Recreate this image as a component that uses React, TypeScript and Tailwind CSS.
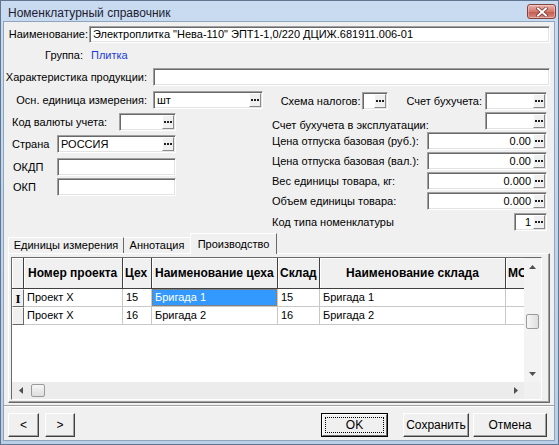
import React from "react";

const FONT = "font-['Liberation_Sans',Arial,sans-serif]";

function Dots() {
  return (
    <span className="flex items-center gap-[1px]">
      <span className="w-[2px] h-[2px] bg-[#202020]" />
      <span className="w-[2px] h-[2px] bg-[#202020]" />
      <span className="w-[2px] h-[2px] bg-[#202020]" />
    </span>
  );
}

function EllButton() {
  return (
    <div className="w-[12px] shrink-0 self-stretch bg-[#f0f0f0] border-t border-l border-white border-r border-b border-r-[#8a8a8a] border-b-[#8a8a8a] flex items-center justify-center">
      <Dots />
    </div>
  );
}

function Field({
  w,
  h = "h-[18px]",
  value = "",
  right = false,
  btn = false,
}: {
  w: string;
  h?: string;
  value?: string;
  right?: boolean;
  btn?: boolean;
}) {
  return (
    <div
      className={`${w} ${h} shrink-0 flex bg-white border border-t-[#a0a0a0] border-l-[#a0a0a0] border-b-white border-r-white shadow-[inset_1px_1px_0_#696969,inset_-1px_-1px_0_#e3e3e3] p-[1px]`}
    >
      <div
        className={`flex-1 flex items-center px-[2px] text-[11px] leading-none whitespace-nowrap overflow-hidden ${
          right ? "justify-end" : ""
        }`}
      >
        {value}
      </div>
      {btn && <EllButton />}
    </div>
  );
}

function Label({ className = "", children }: { className?: string; children: React.ReactNode }) {
  return <div className={`text-[11px] leading-[13px] whitespace-nowrap shrink-0 ${className}`}>{children}</div>;
}

function WinButton({ w, children, def = false }: { w: string; children: React.ReactNode; def?: boolean }) {
  if (def) {
    return (
      <div className={`${w} h-[24px] border border-black shrink-0`}>
        <div className="w-full h-full bg-[#f0f0f0] border-t border-l border-white border-r border-b border-r-[#696969] border-b-[#696969] p-[2px]">
          <div className="w-full h-full border border-dotted border-black flex items-center justify-center text-[12px]">
            {children}
          </div>
        </div>
      </div>
    );
  }
  return (
    <div
      className={`${w} h-[24px] shrink-0 bg-[#f0f0f0] border-t border-l border-white border-r border-b border-r-[#404040] border-b-[#404040] shadow-[inset_-1px_-1px_0_#a0a0a0] flex items-center justify-center text-[12px]`}
    >
      {children}
    </div>
  );
}

function Arrow({ dir }: { dir: "up" | "down" | "left" | "right" }) {
  const pts = {
    up: "0,4 3.5,0 7,4",
    down: "0,0 3.5,4 7,0",
    left: "4,0 0,3.5 4,7",
    right: "0,0 4,3.5 0,7",
  }[dir];
  const vertical = dir === "up" || dir === "down";
  return (
    <svg width={vertical ? 7 : 4} height={vertical ? 4 : 7} viewBox={vertical ? "0 0 7 4" : "0 0 4 7"}>
      <polygon points={pts} fill="#505050" />
    </svg>
  );
}

function CloseButton() {
  return (
    <div className="mt-[3px] w-[29px] h-[15px] rounded-[3px] border border-[#83423c] bg-[linear-gradient(#eab2aa,#d37a70_50%,#c4574b_51%,#d88a7e)] flex items-center justify-center shadow-[inset_0_0_0_1px_rgba(255,255,255,0.35)]">
      <svg width="12" height="10" viewBox="0 0 12 10">
        <path d="M2 1.5 L10 8.5 M10 1.5 L2 8.5" stroke="#6b2a25" strokeWidth="3.4" strokeLinecap="square" />
        <path d="M2 1.5 L10 8.5 M10 1.5 L2 8.5" stroke="#ffffff" strokeWidth="2" strokeLinecap="square" />
      </svg>
    </div>
  );
}

const columns = [
  { w: "w-[99px]", title: "Номер проекта", cls: "pl-[4px]" },
  { w: "w-[29px]", title: "Цех", cls: "pl-[2px]" },
  { w: "w-[126px]", title: "Наименование цеха", cls: "pl-[3px]" },
  { w: "w-[42px]", title: "Склад", cls: "pl-[2px]" },
  { w: "w-[186px]", title: "Наименование склада", cls: "justify-center" },
  { w: "w-[60px]", title: "МО", cls: "pl-[2px]" },
];

const rows = [
  ["Проект Х", "15", "Бригада 1", "15", "Бригада 1", ""],
  ["Проект Х", "16", "Бригада 2", "16", "Бригада 2", ""],
];

function Grid() {
  return (
    <div className="mt-[3px] ml-[2px] w-[531px] h-[143px] border border-t-[#696969] border-l-[#696969] border-b-white border-r-white flex flex-col">
      <div className="flex h-[124px]">
        <div className="w-[512px] overflow-hidden bg-white flex flex-col">
          {/* header */}
          <div className="flex h-[31px] shrink-0">
            <div className="w-[12px] shrink-0 bg-[#f0f0f0] border-r border-b border-[#404040] shadow-[inset_1px_1px_0_#ffffff]" />
            {columns.map((c) => (
              <div
                key={c.title}
                className={`${c.w} ${c.cls} shrink-0 flex items-center bg-[#f0f0f0] border-r border-b border-[#404040] shadow-[inset_1px_1px_0_#ffffff] text-[12px] font-bold whitespace-nowrap overflow-hidden`}
              >
                {c.title}
              </div>
            ))}
          </div>
          {/* body */}
          {rows.map((r, ri) => (
            <div key={ri} className="flex h-[18px] shrink-0">
              <div className="w-[12px] shrink-0 bg-[#f0f0f0] border-t border-l border-white border-r border-b border-r-[#696969] border-b-[#696969] flex items-center justify-center">
                {ri === 0 && (
                  <span className="font-['Liberation_Serif',serif] font-bold text-[13px] leading-none">I</span>
                )}
              </div>
              {r.map((v, ci) => {
                const selected = ri === 0 && ci === 2;
                return (
                  <div
                    key={ci}
                    className={`${columns[ci].w} shrink-0 border-r border-b border-[#c8c8c8] text-[11px] whitespace-nowrap overflow-hidden ${
                      selected ? "p-0" : "pl-[3px] flex items-center"
                    }`}
                  >
                    {selected ? (
                      <div className="w-full h-full bg-[#3399ff] text-white border border-dotted border-[#c86a10] flex items-center pl-[2px]">
                        {v}
                      </div>
                    ) : (
                      v
                    )}
                  </div>
                );
              })}
            </div>
          ))}
        </div>
        {/* vertical scrollbar */}
        <div className="w-[17px] bg-[#f3f3f3] flex flex-col">
          <div className="h-[17px] flex items-center justify-center">
            <Arrow dir="up" />
          </div>
          <div className="flex-1 flex flex-col items-center">
            <div className="mt-[39px] w-[13px] h-[15px] rounded-[2px] border border-[#9a9a9a] bg-[linear-gradient(90deg,#f6f6f6,#dedede)]" />
          </div>
          <div className="h-[17px] flex items-center justify-center">
            <Arrow dir="down" />
          </div>
        </div>
      </div>
      {/* horizontal scrollbar */}
      <div className="flex h-[17px]">
        <div className="w-[512px] bg-[#ececec] flex items-center">
          <div className="w-[17px] h-full flex items-center justify-center">
            <Arrow dir="left" />
          </div>
          <div className="ml-[2px] w-[14px] h-[13px] rounded-[2px] border border-[#9a9a9a] bg-[linear-gradient(#f6f6f6,#dedede)]" />
          <div className="flex-1" />
          <div className="w-[17px] h-full flex items-center justify-center">
            <Arrow dir="right" />
          </div>
        </div>
        <div className="w-[17px] bg-[#f0f0f0]" />
      </div>
    </div>
  );
}

export default function App() {
  return (
    <div
      className={`${FONT} w-[559px] h-[445px] flex flex-col border border-[#60758f] bg-[linear-gradient(#c8dbf0,#b9cfe8)] text-black select-none`}
    >
      {/* title bar */}
      <div className="h-[20px] shrink-0 flex items-start justify-between pl-[7px] pr-[2px]">
        <span className="mt-[5px] text-[12px] leading-[14px] text-[#1f1b33]">Номенклатурный справочник</span>
        <CloseButton />
      </div>

      {/* client area */}
      <div className="flex-1 ml-[2px] mr-[3px] mb-[3px] border border-[#8fa4bd] bg-[#f0f0f0] flex flex-col">
        <div className="mt-[4px] h-[17px] flex items-center">
          <Label className="w-[85px] text-right pr-[1px]">Наименование:</Label>
          <Field w="w-[461px]" h="h-[17px]" value={'Электроплитка "Нева-110" ЭПТ1-1,0/220 ДЦИЖ.681911.006-01'} />
        </div>

        <div className="mt-[4px] h-[16px] flex items-center">
          <Label className="w-[79px] text-right">Группа:</Label>
          <Label className="ml-[8px] text-[#1c3ce0]">Плитка</Label>
        </div>

        <div className="mt-[5px] h-[18px] flex items-center">
          <Label className="w-[149px] text-right pr-[6px]">Характеристика продукции:</Label>
          <Field w="w-[397px]" />
        </div>

        {/* two columns */}
        <div className="mt-[5px] flex items-start">
          <div className="w-[262px] flex flex-col">
            <div className="h-[18px] flex items-center">
              <Label className="w-[149px] text-right pr-[6px]">Осн. единица измерения:</Label>
              <Field w="w-[110px]" value="шт" btn />
            </div>
            <div className="mt-[4px] h-[18px] flex items-center">
              <Label className="w-[115px] pl-[8px]">Код валюты учета:</Label>
              <Field w="w-[57px]" btn />
            </div>
            <div className="mt-[4px] h-[18px] flex items-center">
              <Label className="w-[53px] pl-[8px]">Страна</Label>
              <Field w="w-[119px]" value="РОССИЯ" btn />
            </div>
            <div className="mt-[5px] h-[18px] flex items-center">
              <Label className="w-[53px] pl-[9px]">ОКДП</Label>
              <Field w="w-[119px]" />
            </div>
            <div className="mt-[2px] h-[18px] flex items-center">
              <Label className="w-[53px] pl-[9px]">ОКП</Label>
              <Field w="w-[119px]" />
            </div>
          </div>

          <div className="ml-[4px] w-[277px] pl-[2px] flex flex-col">
            <div className="mt-[1px] h-[18px] flex items-center justify-end">
              <Label className="mr-[2px]">Схема налогов:</Label>
              <Field w="w-[26px]" btn />
              <Label className="ml-[18px] mr-[3px]">Счет бухучета:</Label>
              <Field w="w-[62px]" btn />
            </div>
            <div className="mt-[2px] h-[18px] flex items-end justify-between">
              <Label className="leading-[12px] -mb-[2px]">Счет бухучета в эксплуатации:</Label>
              <Field w="w-[62px]" btn />
            </div>
            <div className="mt-[2px] h-[18px] flex items-center justify-between">
              <Label>Цена отпуска базовая (руб.):</Label>
              <Field w="w-[120px]" value="0.00" right btn />
            </div>
            <div className="mt-[2px] h-[18px] flex items-center justify-between">
              <Label>Цена отпуска базовая (вал.):</Label>
              <Field w="w-[120px]" value="0.00" right btn />
            </div>
            <div className="mt-[2px] h-[18px] flex items-center justify-between">
              <Label>Вес единицы товара, кг:</Label>
              <Field w="w-[120px]" value="0.000" right btn />
            </div>
            <div className="mt-[2px] h-[18px] flex items-center justify-between">
              <Label>Объем единицы товара:</Label>
              <Field w="w-[120px]" value="0.000" right btn />
            </div>
            <div className="mt-[3px] h-[18px] flex items-center justify-between">
              <Label>Код типа номенклатуры</Label>
              <Field w="w-[33px]" value="1" right btn />
            </div>
          </div>
        </div>

        {/* tabs */}
        <div className="mt-[2px] ml-[4px] h-[20px] flex items-end">
          <div className="w-[116px] h-[16px] border-t border-l border-white border-r border-r-[#696969] flex items-center justify-center">
            <Label>Единицы измерения</Label>
          </div>
          <div className="w-[66px] h-[16px] border-t border-white flex items-center justify-center">
            <Label>Аннотация</Label>
          </div>
          <div className="w-[87px] h-[21px] -mb-[1px] z-10 bg-[#f0f0f0] border-t border-l border-white border-r border-r-[#696969] flex items-start justify-center pt-[4px]">
            <Label>Производство</Label>
          </div>
        </div>
        <div className="ml-[4px] w-[542px] h-[150px] border-t border-l border-white border-r border-b border-r-[#696969] border-b-[#696969] shadow-[inset_-1px_-1px_0_#a0a0a0]">
          <Grid />
        </div>

        {/* separator */}
        <div className="mt-[2px] h-[2px] border-t border-[#a0a0a0] border-b border-b-white" />

        {/* buttons */}
        <div className="mt-[6px] h-[24px] flex items-center">
          <div className="ml-[4px]">
            <WinButton w="w-[31px]">&lt;</WinButton>
          </div>
          <div className="ml-[6px]">
            <WinButton w="w-[30px]">&gt;</WinButton>
          </div>
          <div className="flex-1" />
          <WinButton w="w-[67px]" def>
            OK
          </WinButton>
          <div className="ml-[15px]">
            <WinButton w="w-[66px]">Сохранить</WinButton>
          </div>
          <div className="ml-[4px] mr-[7px]">
            <WinButton w="w-[74px]">Отмена</WinButton>
          </div>
        </div>
      </div>
    </div>
  );
}
